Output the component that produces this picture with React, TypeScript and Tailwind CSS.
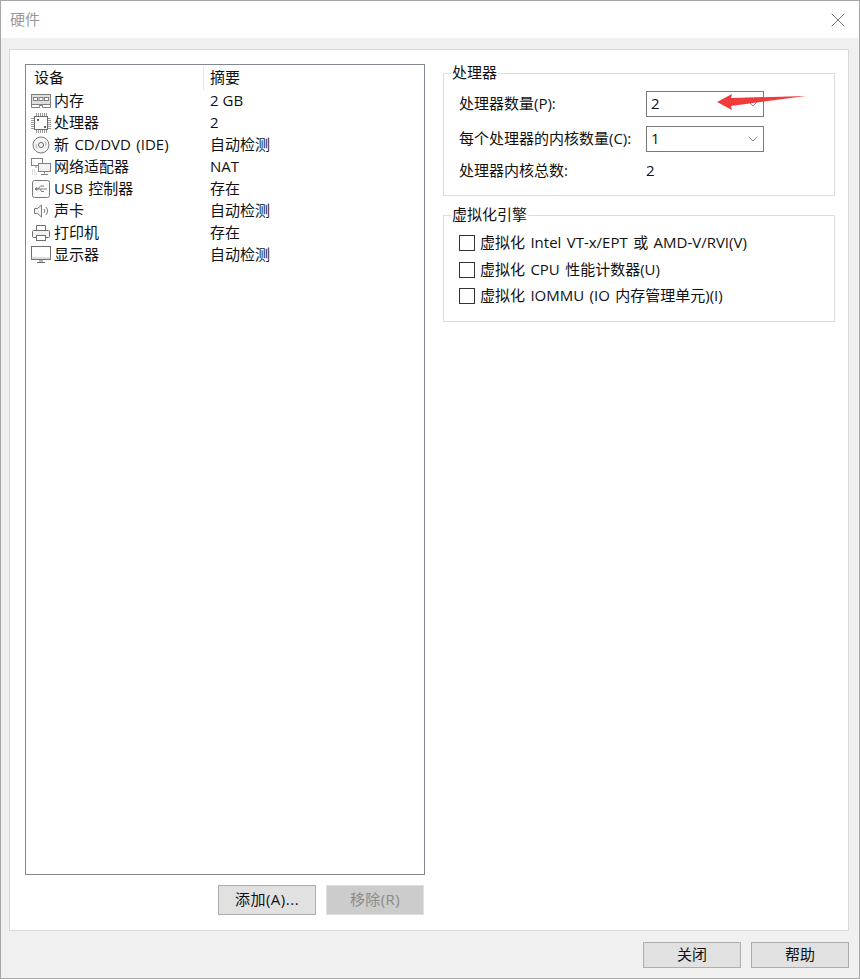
import React from 'react';
import { ChevronDown, X } from 'lucide-react';

const MemoryIcon = () => (
  <svg width="20" height="14" viewBox="0 0 20 14" fill="none" stroke="#808080">
    <rect x="0.5" y="0.5" width="19" height="10" fill="#dedede" />
    <rect x="2.5" y="3.5" width="4" height="3" fill="#fff" />
    <rect x="8" y="3.5" width="4" height="3" fill="#fff" />
    <rect x="13.5" y="3.5" width="4" height="3" fill="#fff" />
    <path d="M0.5 10.5v3h8v-2h3v2h8v-3" />
  </svg>
);

const CpuIcon = () => (
  <svg width="20" height="20" viewBox="0 0 20 20" fill="none">
    <path
      d="M5.5 0v3M7.5 0v3M9.5 0v3M11.5 0v3M13.5 0v3M15.5 0v3M5.5 17v3M7.5 17v3M9.5 17v3M11.5 17v3M13.5 17v3M15.5 17v3M0 5.5h3M0 7.5h3M0 9.5h3M0 11.5h3M0 13.5h3M0 15.5h3M17 5.5h3M17 7.5h3M17 9.5h3M17 11.5h3M17 13.5h3M17 15.5h3"
      stroke="#999"
    />
    <rect x="3.5" y="3.5" width="13" height="13" fill="#fff" stroke="#6a6a6a" />
    <rect x="6" y="6" width="2" height="2" fill="#666" />
    <rect x="13" y="13" width="2" height="2" fill="#666" />
  </svg>
);

const DiscIcon = () => (
  <svg width="18" height="18" viewBox="0 0 18 18" fill="none" stroke="#7a7a7a">
    <circle cx="9" cy="9" r="8" fill="#f4f4f4" />
    <circle cx="9" cy="9" r="2.5" fill="#fff" stroke="#666" />
    <path d="M13 5.5a5 5 0 0 1 .8 4M5 12.5a5 5 0 0 1-.8-4" stroke="#aaa" />
  </svg>
);

const NetworkIcon = () => (
  <svg width="20" height="18" viewBox="0 0 20 18" fill="none" stroke="#808080">
    <rect x="0.5" y="0.5" width="11" height="7" fill="#fff" />
    <rect x="7.5" y="5.5" width="12" height="8" fill="#f2f2f2" />
    <path d="M13.5 13.5v2M10 16.5h7M5 8v2" />
    <path d="M1 12h4M1 14h4M1 16h6" stroke="#bbb" strokeDasharray="1 1" />
  </svg>
);

const UsbIcon = () => (
  <svg width="18" height="18" viewBox="0 0 18 18" fill="none" stroke="#7a7a7a">
    <rect x="0.5" y="0.5" width="17" height="17" rx="2" fill="#fbfbfb" />
    <path d="M3 9h12M6 9l2.5-3H12M8 9l1.5 2.5H12M3 9l2-1.5v3z" />
  </svg>
);

const SpeakerIcon = () => (
  <svg width="16" height="16" viewBox="0 0 16 16" fill="none" stroke="#7a7a7a">
    <path d="M1.5 5.5h3l4-3.5v12l-4-3.5h-3z" fill="#f4f4f4" />
    <path d="M11 6a3 3 0 0 1 0 4M13 4a6 6 0 0 1 0 8" />
  </svg>
);

const PrinterIcon = () => (
  <svg width="18" height="18" viewBox="0 0 18 18" fill="none" stroke="#6f6f6f">
    <path d="M4.5 6V1.5h9V6" />
    <rect x="0.5" y="6.5" width="17" height="7" rx="1" fill="#f2f2f2" />
    <rect x="4.5" y="11.5" width="9" height="5" fill="#fff" />
  </svg>
);

const DisplayIcon = () => (
  <svg width="20" height="18" viewBox="0 0 20 18" fill="none" stroke="#6f6f6f">
    <rect x="0.5" y="0.5" width="19" height="13" fill="#fff" />
    <path d="M0.5 12h19" stroke="#bbb" />
    <path d="M6 16.5h8M9 14v2M11 14v2" />
  </svg>
);

const devices = [
  { icon: <MemoryIcon />, name: '内存', summary: '2 GB' },
  { icon: <CpuIcon />, name: '处理器', summary: '2' },
  { icon: <DiscIcon />, name: '新 CD/DVD (IDE)', summary: '自动检测' },
  { icon: <NetworkIcon />, name: '网络适配器', summary: 'NAT' },
  { icon: <UsbIcon />, name: 'USB 控制器', summary: '存在' },
  { icon: <SpeakerIcon />, name: '声卡', summary: '自动检测' },
  { icon: <PrinterIcon />, name: '打印机', summary: '存在' },
  { icon: <DisplayIcon />, name: '显示器', summary: '自动检测' },
];

const Combo = ({ value, children }: { value: string; children?: React.ReactNode }) => (
  <div className="relative flex items-center justify-between w-[118px] h-[26px] border border-[#7a7a7a] bg-white pl-[4px] pr-[2px]">
    <span className="pb-[2px]">{value}</span>
    <ChevronDown size={16} strokeWidth={1} className="text-[#555]" />
    {children}
  </div>
);

const Check = ({ label }: { label: string }) => (
  <div className="flex items-center h-[26.5px]">
    <span className="w-[16px] h-[16px] border border-[#333] bg-white" />
    <span className="ml-[5px] pb-[2px] whitespace-nowrap [word-spacing:1.5px]">{label}</span>
  </div>
);

const App = () => {
  return (
    <div
      className="w-[860px] h-[979px] flex flex-col border border-[#a6a6a6] bg-[#f0f0f0] text-[15px] leading-[18px] text-[#111]"
      style={{ fontFamily: '"Open Sans", "Noto Sans CJK SC", sans-serif' }}
    >
      <div className="h-[37px] shrink-0 bg-white flex items-center justify-between pl-[9px] pr-[9px]">
        <span className="text-[#999] pb-[2px]">硬件</span>
        <X size={24} strokeWidth={1} className="text-[#777]" />
      </div>

      <div className="flex-1 flex flex-col pl-[8px] pr-[10px] pt-[11px]">
        <div className="h-[882px] bg-white border border-[#d9d9d9] flex pl-[15px] pt-[14px]">
          <div className="w-[400px] shrink-0">
            <div className="h-[811px] border border-[#828790]">
              <div className="flex h-[25px] items-center">
                <span className="w-[177px] pl-[8px] pb-[2px]">设备</span>
                <span className="border-l border-[#e5e5e5] pl-[6px] pb-[2px] h-[24px] flex items-center">摘要</span>
              </div>
              {devices.map((d) => (
                <div key={d.name} className="flex h-[22px] items-center">
                  <span className="w-[28px] flex justify-center pl-[1px] shrink-0">{d.icon}</span>
                  <span className="w-[156px] pb-[2px] whitespace-nowrap [word-spacing:1.5px]">{d.name}</span>
                  <span className="pb-[2px] whitespace-nowrap">{d.summary}</span>
                </div>
              ))}
            </div>
            <div className="flex justify-end gap-[10px] mt-[10px] pr-[1px]">
              <button className="w-[98px] h-[30px] pb-[2px] bg-[#e1e1e1] border border-[#adadad] tracking-[0.5px]">添加(A)...</button>
              <button className="w-[98px] h-[30px] pb-[2px] bg-[#cccccc] border border-[#e0e0e0] text-[#8a8a8a] tracking-[0.4px]">移除(R)</button>
            </div>
          </div>

          <div className="w-[392px] ml-[18px] flex flex-col gap-[10px]">
            <fieldset className="h-[132px] border border-[#dcdcdc] px-[15px]">
              <legend className="px-[1px] -ml-[8px]">
                <span className="inline-block -translate-y-px">处理器</span>
              </legend>
              <div className="flex items-center justify-between pr-[55px] mt-[9px]">
                <span className="pb-[2px]">处理器数量(P):</span>
                <Combo value="2">
                  <svg
                    className="absolute left-[69px] -top-[1px]"
                    width="92"
                    height="20"
                    viewBox="0 0 92 20"
                  >
                    <polygon points="1,11 16,3 15,7 90,5 15,15 16,19" fill="#ef3b3b" />
                  </svg>
                </Combo>
              </div>
              <div className="flex items-center justify-between pr-[55px] mt-[9px]">
                <span className="pb-[2px]">每个处理器的内核数量(C):</span>
                <Combo value="1" />
              </div>
              <div className="flex items-center mt-[9px]">
                <span className="w-[187px]">处理器内核总数:</span>
                <span>2</span>
              </div>
            </fieldset>

            <fieldset className="h-[116px] border border-[#dcdcdc] px-[15px]">
              <legend className="px-[1px] -ml-[8px]">
                <span className="inline-block -translate-y-px">虚拟化引擎</span>
              </legend>
              <div className="mt-[6px]">
                <Check label="虚拟化 Intel VT-x/EPT 或 AMD-V/RVI(V)" />
                <Check label="虚拟化 CPU 性能计数器(U)" />
                <Check label="虚拟化 IOMMU (IO 内存管理单元)(I)" />
              </div>
            </fieldset>
          </div>
        </div>

        <div className="flex justify-end gap-[10px] mt-[11px]">
          <button className="w-[98px] h-[26px] pb-[2px] bg-[#e1e1e1] border border-[#adadad]">关闭</button>
          <button className="w-[98px] h-[26px] pb-[2px] bg-[#e1e1e1] border border-[#adadad]">帮助</button>
        </div>
      </div>
    </div>
  );
};

export default App;
